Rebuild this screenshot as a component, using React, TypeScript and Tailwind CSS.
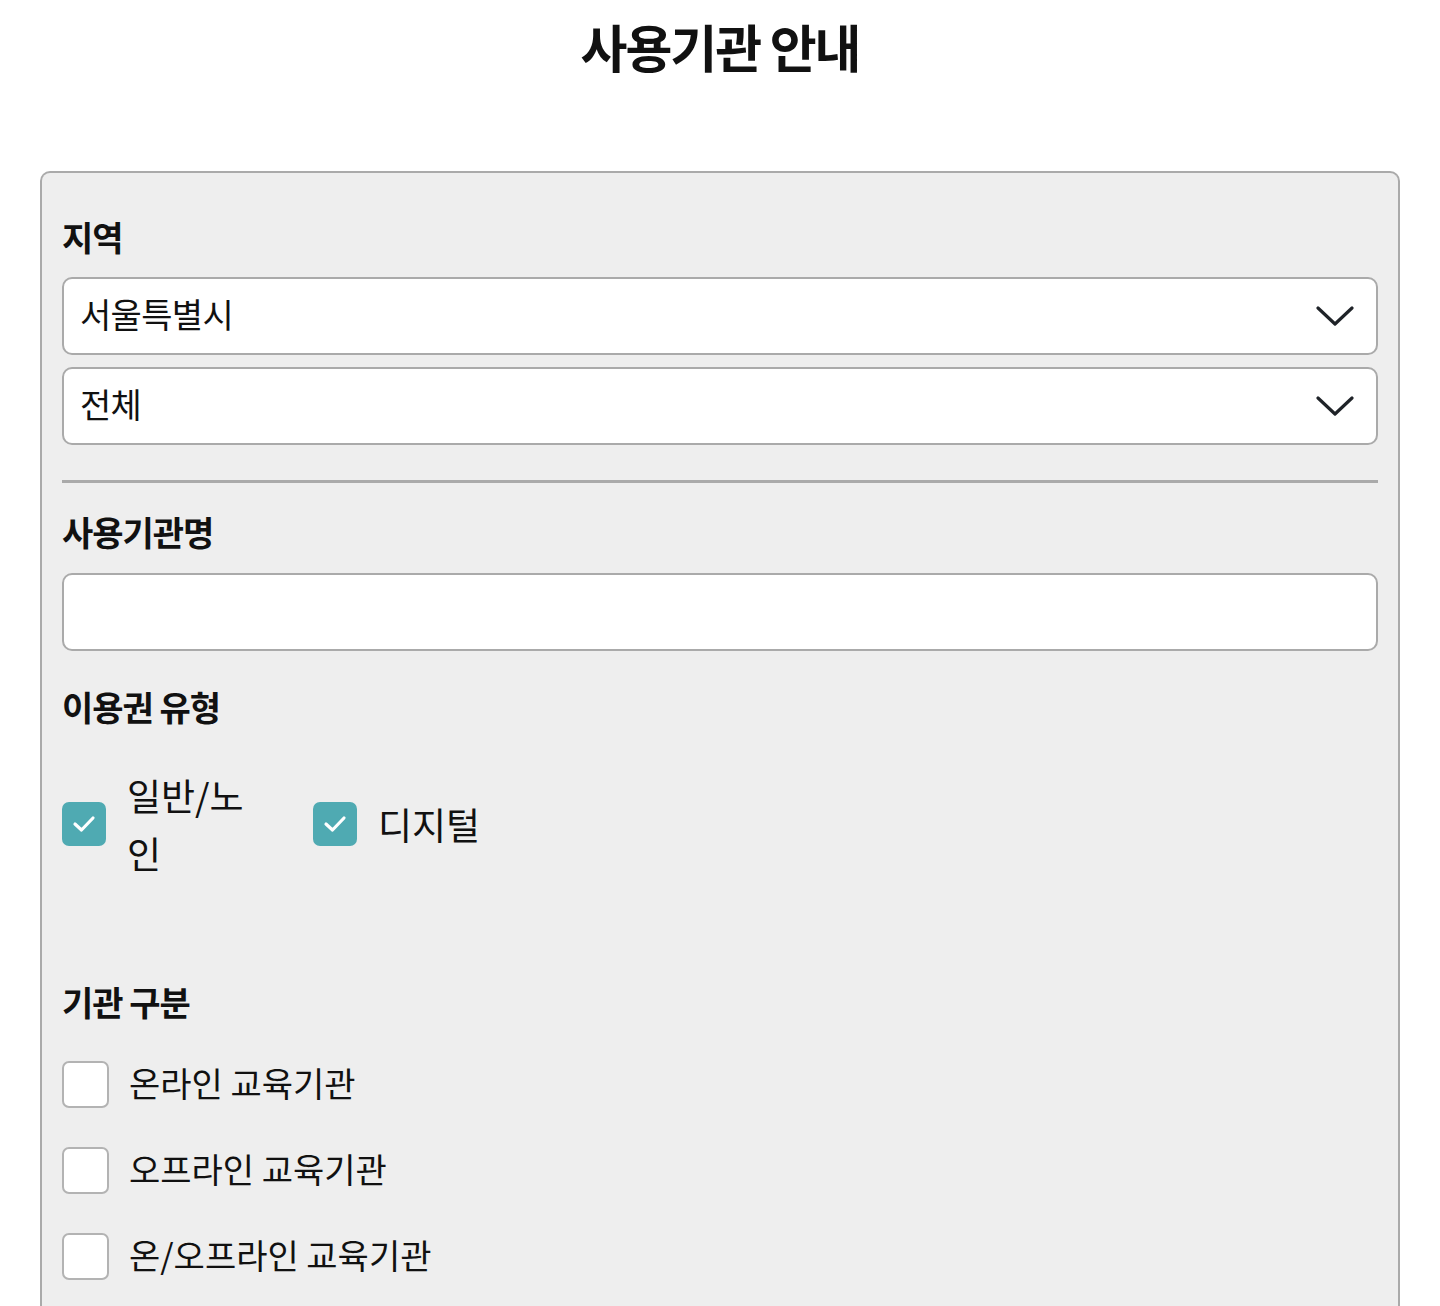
import React from 'react'

const font = { fontFamily: '"Noto Sans CJK KR", "Noto Sans", sans-serif' }

function Chevron() {
  return (
    <svg width="38" height="22" viewBox="0 0 38 22" fill="none" className="shrink-0">
      <polyline points="2,3 19,19 36,3" stroke="#1f2328" strokeWidth="3.2" strokeLinecap="round" strokeLinejoin="round" />
    </svg>
  )
}

function Select({ value }: { value: string }) {
  return (
    <div className="flex h-[78px] items-center justify-between rounded-[10px] border-2 border-[#aaaaaa] bg-white pl-4 pr-[22px]">
      <span className="pb-[4px] text-[34px] leading-none tracking-[-0.02em] text-[#111]">{value}</span>
      <Chevron />
    </div>
  )
}

function Label({ children, className = '' }: { children: React.ReactNode; className?: string }) {
  return (
    <h3 className={`h-10 text-[34px] leading-10 font-bold tracking-[-0.03em] text-[#111] ${className}`}>{children}</h3>
  )
}

function Checked() {
  return (
    <span className="flex h-[44px] w-[44px] shrink-0 items-center justify-center rounded-[7px] bg-[#4faab2]">
      <svg width="24" height="20" viewBox="0 0 24 20" fill="none">
        <polyline points="3,10 9.5,16 21,4" stroke="white" strokeWidth="3.2" strokeLinecap="round" strokeLinejoin="round" />
      </svg>
    </span>
  )
}

function Unchecked() {
  return <span className="h-[47px] w-[47px] shrink-0 rounded-[7px] border-2 border-[#b3b3b3] bg-white" />
}

export default function App() {
  const kinds = ['온라인 교육기관', '오프라인 교육기관', '온/오프라인 교육기관']
  return (
    <div className="h-[1306px] overflow-hidden bg-white" style={font}>
      <h1 className="pt-[13px] text-center text-[51px] leading-[66px] font-bold tracking-[-0.04em] text-[#111]">
        사용기관 안내
      </h1>

      <div className="mx-10 mt-[92px] rounded-t-[10px] border-2 border-b-0 border-[#aaaaaa] bg-[#eeeeee] px-5 pt-[44px] pb-[120px]">
        <Label>지역</Label>
        <div className="mt-5 flex flex-col gap-3">
          <Select value="서울특별시" />
          <Select value="전체" />
        </div>

        <div className="mt-[35px] h-[3px] bg-[#aaaaaa]" />

        <Label className="mt-[29px]">사용기관명</Label>
        <input
          type="text"
          className="mt-[21px] block h-[78px] w-full rounded-[10px] border-2 border-[#aaaaaa] bg-white px-4 text-[32px] outline-none"
        />

        <Label className="mt-[36px]">이용권 유형</Label>
        <div className="mt-[39px] flex items-center">
          <div className="flex items-center">
            <Checked />
            <span className="ml-[21px] w-[130px] text-[37px] leading-[58px] text-[#111]">일반/노인</span>
          </div>
          <div className="ml-[56px] flex items-center">
            <Checked />
            <span className="ml-[21px] text-[37px] leading-[58px] text-[#111]">디지털</span>
          </div>
        </div>

        <Label className="mt-[100px]">기관 구분</Label>
        <div className="mt-[39px] flex flex-col gap-[39px]">
          {kinds.map((k) => (
            <label key={k} className="flex items-center">
              <Unchecked />
              <span className="ml-5 pb-[4px] text-[34px] leading-none text-[#111]">{k}</span>
            </label>
          ))}
        </div>
      </div>
    </div>
  )
}
